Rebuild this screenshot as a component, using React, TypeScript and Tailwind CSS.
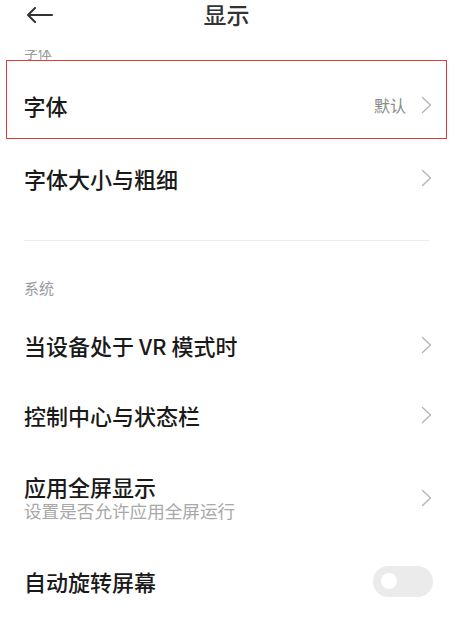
import React from 'react'

const font = { fontFamily: '"Noto Sans CJK SC", "Noto Sans", sans-serif' }

function Chevron() {
  return (
    <svg width="11" height="18" viewBox="0 0 11 18" fill="none">
      <polyline points="1.5,1.5 9.5,9 1.5,16.5" stroke="#b3b3b3" strokeWidth="1.3" strokeLinecap="round" strokeLinejoin="round" />
    </svg>
  )
}

function Row({ title, sub, right }: { title: string; sub?: string; right?: React.ReactNode }) {
  return (
    <div className={`flex items-center justify-between pl-6 pr-[21px] ${sub ? 'h-[96px]' : 'h-[70px]'}`}>
      <div className="flex flex-col">
        <span className="text-[22px] leading-[26px] font-medium text-[#1a1a1a]">{title}</span>
        {sub && <span className="text-[17.6px] leading-[24px] text-[#a8a8a8]">{sub}</span>}
      </div>
      {right ?? <Chevron />}
    </div>
  )
}

export default function App() {
  return (
    <div className="w-[453px] h-[620px] bg-white overflow-hidden" style={font}>
      {/* header */}
      <div className="h-[50px]">
        <div className="relative h-[30px] flex items-center justify-center">
          <svg className="absolute left-[26px] top-[7px]" width="28" height="16" viewBox="0 0 28 16" fill="none">
            <path d="M2 8 H26 M9 1 L2 8 L9 15" stroke="#333" strokeWidth="2" strokeLinecap="round" strokeLinejoin="round" />
          </svg>
          <span className="text-[23px] leading-[30px] font-medium text-[#333] -translate-y-[1px]">显示</span>
        </div>
      </div>

      {/* section label scrolled under header */}
      <div className="h-[10px] overflow-hidden flex items-end pl-6">
        <span className="text-[14px] leading-[14px] text-[#999] translate-y-[-1px]">字体</span>
      </div>

      {/* highlighted row */}
      <div className="mx-[6px] h-[79px] border-[1.5px] border-[#e53935] flex items-end pb-[20px] pl-[16.5px] pr-[14px]">
        <div className="flex w-full items-center justify-between">
          <span className="text-[22px] leading-[26px] font-medium text-[#1a1a1a]">字体</span>
          <div className="flex items-center gap-[15px]">
            <span className="text-[16px] leading-[20px] text-[#888]">默认</span>
            <Chevron />
          </div>
        </div>
      </div>

      <div className="h-[78px] flex items-center justify-between pl-6 pr-[21px]">
        <span className="text-[22px] leading-[26px] font-medium text-[#1a1a1a]">字体大小与粗细</span>
        <Chevron />
      </div>

      <div className="mt-[23px] mx-6 h-px bg-[#ececec]" />

      <div className="mt-[37px] pl-6 text-[15px] leading-[20px] text-[#9a9aa6]">系统</div>

      <div className="mt-[12px]">
        <Row title="当设备处于 VR 模式时" />
        <Row title="控制中心与状态栏" />
        <Row title="应用全屏显示" sub="设置是否允许应用全屏运行" />
        <Row
          title="自动旋转屏幕"
          right={
            <div className="w-[60px] h-[31px] rounded-full bg-[#ebebeb] flex items-center pl-[8px] mr-[-1px]">
              <div className="w-[16px] h-[16px] rounded-full bg-white" />
            </div>
          }
        />
      </div>
    </div>
  )
}
